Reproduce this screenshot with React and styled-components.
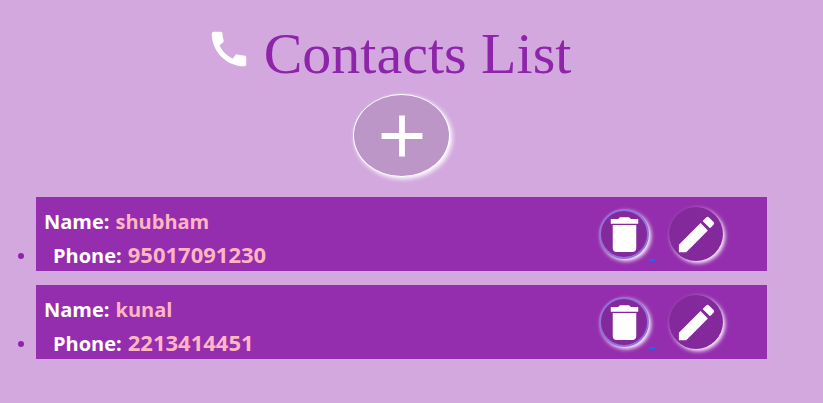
import React from "react";
import styled, { createGlobalStyle } from "styled-components";

const GlobalStyle = createGlobalStyle`
  * { box-sizing: border-box; }
  body {
    margin: 0;
    background: #d2a8de;
    color: #8e24aa;
    font-family: "Segoe UI", "Open Sans", "Noto Sans", sans-serif;
  }
`;

const Page = styled.main`
  min-height: 100vh;
  padding: 20px 56px 20px 0;
`;

const Header = styled.header`
  display: flex;
  flex-direction: column;
  align-items: center;
  gap: 6px;
  padding-left: 36px;
`;

const Title = styled.h1`
  display: flex;
  align-items: center;
  gap: 12px;
  margin: 0;
  padding-right: 26px;
  font: 400 58px/68px "Liberation Serif", serif;
`;

const Icon = styled.svg`
  display: block;
  flex: none;
  width: ${(p) => p.$size}px;
  height: ${(p) => p.$size}px;
  fill: #fff;
`;

const TitleIcon = styled(Icon)`
  margin-bottom: 10px;
`;

const RoundButton = styled.button`
  display: flex;
  flex: none;
  align-items: center;
  justify-content: center;
  width: 54px;
  height: 54px;
  padding: 0;
  border: 0;
  border-radius: 50%;
  background: #84299b;
  box-shadow: 2px 2px 4px #fff;
  cursor: pointer;
`;

const AddButton = styled(RoundButton)`
  width: 97px;
  height: 83px;
  border: 1px solid #fff;
  background: #bb96c7;
  box-shadow: 2px 2px 5px #fff;
`;

const DeleteButton = styled(RoundButton)`
  width: 50px;
  height: 50px;
  border: 2px solid #9370db;
`;

const List = styled.ul`
  display: flex;
  flex-direction: column;
  gap: 14px;
  margin: 20px 0 0;
  padding: 0;
  list-style: none;
`;

const Item = styled.li`
  display: flex;
  align-items: flex-end;

  &::before {
    content: "";
    flex: none;
    width: 6px;
    height: 6px;
    margin: 0 12px 12px 18px;
    border-radius: 50%;
    background: #8e24aa;
  }
`;

const Card = styled.article`
  display: flex;
  flex: 1;
  align-items: center;
  justify-content: space-between;
  min-height: 74px;
  padding: 9px 44px 1px 8px;
  background: #942eae;
`;

const Details = styled.dl`
  margin: 0;
  color: #fff;
  font-size: 20px;
  font-weight: 700;
  line-height: 32px;
`;

const Field = styled.div`
  display: flex;
  align-items: baseline;
  gap: 6px;
  height: 32px;
  padding-left: ${(p) => (p.$indent ? 9 : 0)}px;
`;

const Value = styled.dd`
  margin: 0;
  color: #ffb6c1;
  font-size: ${(p) => (p.$numeric ? 22 : 20)}px;
`;

const Actions = styled.div`
  display: flex;
  align-items: center;
  margin-bottom: 8px;
`;

const Dash = styled.span`
  align-self: flex-end;
  width: 6px;
  height: 2px;
  margin-right: 14px;
  background: #0d6efd;
`;

const contacts = [
  { name: "shubham", phone: "95017091230" },
  { name: "kunal", phone: "2213414451" },
];

function ContactItem({ name, phone }) {
  return (
    <Item>
      <Card>
        <Details>
          <Field>
            <dt>Name:</dt>
            <Value>{name}</Value>
          </Field>
          <Field $indent>
            <dt>Phone:</dt>
            <Value $numeric>{phone}</Value>
          </Field>
        </Details>
        <Actions>
          <DeleteButton type="button" aria-label={`Delete ${name}`}>
            <Icon $size={47} viewBox="0 0 24 24" aria-hidden="true">
              <path d="M6 7.2h12V19c0 1.1-.8 1.9-1.9 1.9H7.9C6.8 20.9 6 20.1 6 19zM5 4.1h3.7l1-.9h4.6l1 .9H19v2.4H5z" />
            </Icon>
          </DeleteButton>
          <Dash />
          <RoundButton type="button" aria-label={`Edit ${name}`}>
            <Icon $size={47} viewBox="0 0 24 24" aria-hidden="true">
              <path d="M3 17.25V21h3.75L17.81 9.94l-3.75-3.75L3 17.25zM20.71 7.04c.39-.39.39-1.02 0-1.41l-2.34-2.34a.9959.9959 0 0 0-1.41 0l-1.83 1.83 3.75 3.75 1.83-1.83z" />
            </Icon>
          </RoundButton>
        </Actions>
      </Card>
    </Item>
  );
}

export default function App() {
  return (
    <>
      <GlobalStyle />
      <Page>
        <Header>
          <Title>
            <TitleIcon $size={46} viewBox="0 0 24 24" aria-hidden="true">
              <path d="M20.01 15.38c-1.23 0-2.42-.2-3.53-.56-.35-.12-.74-.03-1.01.24l-1.57 1.97c-2.83-1.35-5.48-3.9-6.89-6.83l1.95-1.66c.27-.28.35-.67.24-1.02-.37-1.11-.56-2.3-.56-3.53 0-.54-.45-.99-.99-.99H4.19C3.65 3 3 3.24 3 3.99 3 13.28 10.73 21 20.01 21c.71 0 .99-.63.99-1.18v-3.45c0-.54-.45-.99-.99-.99z" />
            </TitleIcon>
            Contacts List
          </Title>
          <AddButton type="button" aria-label="Add contact">
            <Icon $size={70} viewBox="0 0 24 24" aria-hidden="true">
              <path d="M19 13h-6v6h-2v-6H5v-2h6V5h2v6h6v2z" />
            </Icon>
          </AddButton>
        </Header>
        <List>
          {contacts.map((c) => (
            <ContactItem key={c.phone} {...c} />
          ))}
        </List>
      </Page>
    </>
  );
}
